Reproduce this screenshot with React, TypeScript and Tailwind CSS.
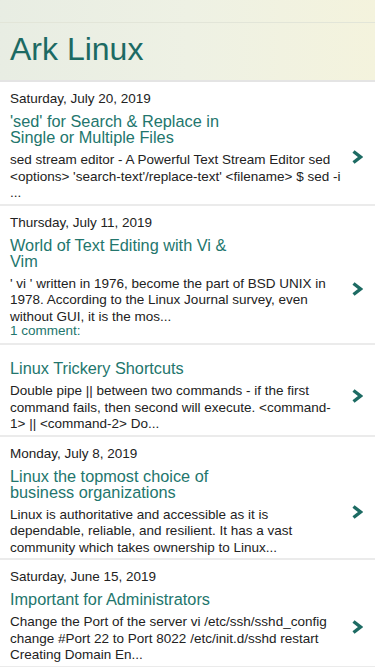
const posts = [
  {
    date: 'Saturday, July 20, 2019',
    title: "'sed' for Search & Replace in Single or Multiple Files",
    snippet:
      "sed stream editor - A Powerful Text Stream Editor sed <options> 'search-text'/replace-text' <filename> $ sed -i ...",
  },
  {
    date: 'Thursday, July 11, 2019',
    title: 'World of Text Editing with Vi & Vim',
    snippet:
      "' vi ' written in 1976, become the part of BSD UNIX in 1978. According to the Linux Journal survey, even without GUI, it is the mos...",
    comments: '1 comment:',
  },
  {
    date: '',
    title: 'Linux Trickery Shortcuts',
    snippet:
      'Double pipe || between two commands - if the first command fails, then second will execute. <command-1> || <command-2> Do...',
  },
  {
    date: 'Monday, July 8, 2019',
    title: 'Linux the topmost choice of business organizations',
    snippet:
      'Linux is authoritative and accessible as it is dependable, reliable, and resilient. It has a vast community which takes ownership to Linux...',
  },
  {
    date: 'Saturday, June 15, 2019',
    title: 'Important for Administrators',
    snippet:
      'Change the Port of the server vi /etc/ssh/sshd_config change #Port 22 to Port 8022 /etc/init.d/sshd restart Creating Domain En...',
  },
];

const Chevron = () => (
  <svg width="12" height="14" viewBox="0 0 12 14" className="text-[#1d6b63]">
    <polyline points="2.5,1.5 9.5,7 2.5,12.5" fill="none" stroke="currentColor" strokeWidth="3.4" strokeLinejoin="miter" />
  </svg>
);

export default function App() {
  return (
    <div className="min-h-screen bg-white font-['Liberation_Sans',Arial,sans-serif] text-[#222]">
      {/* header */}
      <div className="bg-gradient-to-r from-[#e8ede3] via-[#eef1e4] to-[#f4f3dd]">
        <div className="h-[23px] border-b border-[#e2e5d8]" />
        <h1 className="h-[57px] pl-[10px] pt-[8px] text-[32px] leading-[36px] text-[#1c6a63]">Ark Linux</h1>
      </div>
      <div className="h-[2px] bg-[#e4e4e4]" />

      {posts.map((p, i) => (
        <div key={i} className="border-b-2 border-[#ebebeb] pl-[10px] pr-[12px] pt-[9px] pb-[2px]">
          {p.date && <div className="h-[16px] text-[13.5px] leading-[16px]">{p.date}</div>}
          <div className="flex items-center">
            <div className="flex-1 pt-[6px]">
              <div className="max-w-[235px] text-[16.3px] leading-[16px] text-[#23766d]">{p.title}</div>
              <div className="mt-[7px] text-[13.5px] leading-[16.5px]">{p.snippet}</div>
              {p.comments && (
                <div className="mb-[4px] text-[13.5px] leading-[12px] text-[#23766d]">{p.comments}</div>
              )}
            </div>
            <div className="flex w-[20px] justify-end pt-[6px]">
              <Chevron />
            </div>
          </div>
        </div>
      ))}
    </div>
  );
}
